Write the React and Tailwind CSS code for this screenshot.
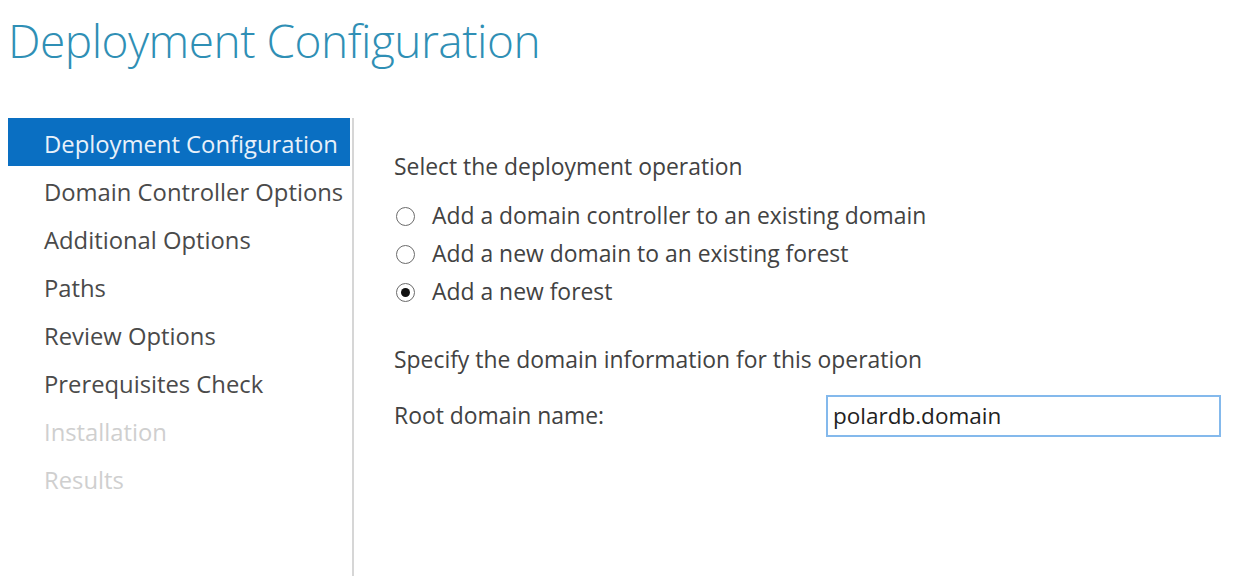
import React from "react";

const steps = [
  { label: "Deployment Configuration", state: "active" },
  { label: "Domain Controller Options", state: "done" },
  { label: "Additional Options", state: "done" },
  { label: "Paths", state: "done" },
  { label: "Review Options", state: "done" },
  { label: "Prerequisites Check", state: "done" },
  { label: "Installation", state: "disabled" },
  { label: "Results", state: "disabled" },
];

const operations = [
  { label: "Add a domain controller to an existing domain", checked: false },
  { label: "Add a new domain to an existing forest", checked: false },
  { label: "Add a new forest", checked: true },
];

function Radio({ checked }) {
  return (
    <span className="w-[19px] h-[19px] rounded-full border-[1.5px] border-[#6b6b6b] bg-white flex items-center justify-center shrink-0">
      {checked && <span className="w-[9px] h-[9px] rounded-full bg-[#111]" />}
    </span>
  );
}

export default function App() {
  return (
    <div className="w-[1234px] h-[576px] overflow-hidden bg-white font-['Open_Sans',sans-serif] text-[#424242]">
      <h1 className="pl-[8px] pt-[10px] h-[118px] text-[46px] leading-[60px] font-light text-[#2f8fb5] tracking-[-0.5px]">
        Deployment Configuration
      </h1>

      <div className="flex pl-[8px] h-[458px]">
        {/* wizard steps */}
        <nav className="w-[342px] shrink-0">
          {steps.map((s) => (
            <div
              key={s.label}
              className={
                s.state === "active"
                  ? "h-[48px] pl-[36px] pt-[6px] flex items-center text-[23.8px] whitespace-nowrap bg-[#0a6fc2] text-[#e8f1fa]"
                  : s.state === "disabled"
                  ? "h-[48px] pl-[36px] pt-[6px] flex items-center text-[23.8px] whitespace-nowrap text-[#cfcfcf]"
                  : "h-[48px] pl-[36px] pt-[6px] flex items-center text-[23.8px] whitespace-nowrap text-[#4a4a4a]"
              }
            >
              {s.label}
            </div>
          ))}
        </nav>

        <div className="w-[2px] ml-[2px] bg-[#d6d6d6]" />

        {/* main panel */}
        <div className="pl-[40px] pt-[35px] flex-1 text-[22.9px]">
          <p className="leading-[28px] whitespace-nowrap">Select the deployment operation</p>

          <div className="mt-[16px]">
            {operations.map((op) => (
              <div key={op.label} className="h-[38px] flex items-center pl-[2px]">
                <Radio checked={op.checked} />
                <span className="ml-[17px] whitespace-nowrap">{op.label}</span>
              </div>
            ))}
          </div>

          <p className="mt-[35px] leading-[28px] whitespace-nowrap">
            Specify the domain information for this operation
          </p>

          <div className="mt-[21px] flex items-center">
            <span className="w-[432px]">Root domain name:</span>
            <div className="w-[395px] h-[42px] border-[2px] border-[#84b9ec] bg-white flex items-center pl-[5px] text-[22.5px] text-[#222]">
              polardb.domain
            </div>
          </div>
        </div>
      </div>
    </div>
  );
}
